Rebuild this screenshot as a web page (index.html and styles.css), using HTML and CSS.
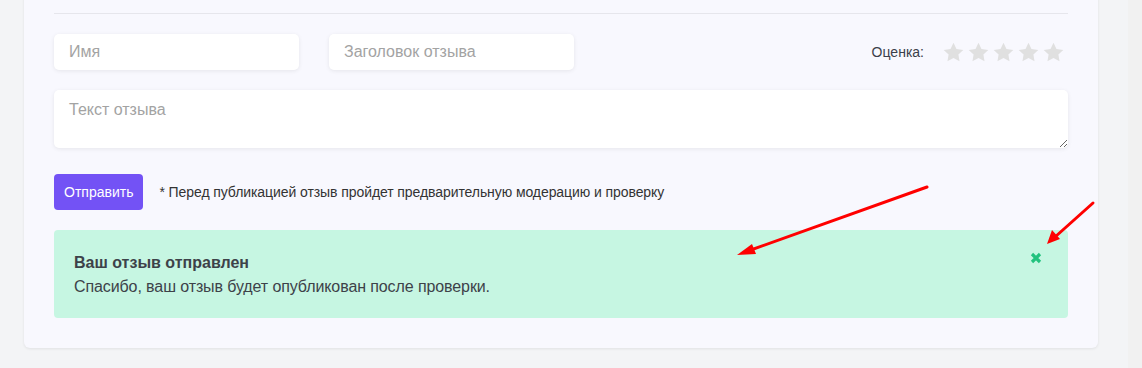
FILE: index.html
```html
<!DOCTYPE html>
<html lang="ru">
<head>
  <meta charset="UTF-8">
  <meta name="viewport" content="width=device-width, initial-scale=1.0">
  <title>Отзывы</title>
  <link rel="stylesheet" href="styles.css">
</head>
<body>

  <div class="page">
    <div class="card">
      <hr class="divider">

      <form class="review-form" onsubmit="return false">
        <div class="row">
          <input type="text" class="field" placeholder="Имя">
          <input type="text" class="field" placeholder="Заголовок отзыва">
          <div class="rating">
            <span class="rating-label">Оценка:</span>
            <div class="stars">
              <svg viewBox="0 0 24 24"><path d="M12 .8l3.4 7.1 7.8 1.1-5.6 5.4 1.3 7.7L12 18.4l-6.9 3.7 1.3-7.7L.8 9l7.8-1.1z"/></svg>
              <svg viewBox="0 0 24 24"><path d="M12 .8l3.4 7.1 7.8 1.1-5.6 5.4 1.3 7.7L12 18.4l-6.9 3.7 1.3-7.7L.8 9l7.8-1.1z"/></svg>
              <svg viewBox="0 0 24 24"><path d="M12 .8l3.4 7.1 7.8 1.1-5.6 5.4 1.3 7.7L12 18.4l-6.9 3.7 1.3-7.7L.8 9l7.8-1.1z"/></svg>
              <svg viewBox="0 0 24 24"><path d="M12 .8l3.4 7.1 7.8 1.1-5.6 5.4 1.3 7.7L12 18.4l-6.9 3.7 1.3-7.7L.8 9l7.8-1.1z"/></svg>
              <svg viewBox="0 0 24 24"><path d="M12 .8l3.4 7.1 7.8 1.1-5.6 5.4 1.3 7.7L12 18.4l-6.9 3.7 1.3-7.7L.8 9l7.8-1.1z"/></svg>
            </div>
          </div>
        </div>

        <textarea class="field text" placeholder="Текст отзыва"></textarea>

        <div class="submit-row">
          <button type="submit" class="btn">Отправить</button>
          <span class="note">* Перед публикацией отзыв пройдет предварительную модерацию и проверку</span>
        </div>
      </form>

      <div class="alert">
        <div>
          <div class="alert-title">Ваш отзыв отправлен</div>
          <div class="alert-text">Спасибо, ваш отзыв будет опубликован после проверки.</div>
        </div>
        <svg class="alert-close" viewBox="0 0 12 12"><path d="M2 2l8 8M10 2l-8 8"/></svg>
      </div>
    </div>
  </div>

  <div class="scrollbar"></div>

  <!-- annotation arrows -->
  <svg class="arrows" width="1142" height="368" viewBox="0 0 1142 368">
    <line x1="927" y1="187" x2="748" y2="251"/>
    <polygon points="737,255 752,244 756,254"/>
    <line x1="1093" y1="203" x2="1055" y2="237"/>
    <polygon points="1047,244 1052,230 1060,239"/>
  </svg>

</body>
</html>
```

FILE: styles.css
```css
body {
  margin: 0;
  height: 368px;
  overflow: hidden;
  display: flex;
  background: #f3f4f6;
  font-family: "Liberation Sans", Arial, sans-serif;
  color: #333;
}
.page {
  flex: 1;
  padding: 0 30px 0 24px;
}
.scrollbar {
  width: 14px;
  background: #f1f1f1;
}
.card {
  margin-top: -20px;
  padding: 33px 30px 30px;
  background: #f8f8fe;
  border-radius: 6px;
  box-shadow: 0 1px 3px rgba(0, 0, 0, 0.08);
}
.divider {
  margin: 0 0 20px;
  border: none;
  border-top: 1px solid #e6e6ec;
}
.row {
  display: flex;
  align-items: center;
  gap: 30px;
  margin-bottom: 20px;
}
.field {
  box-sizing: border-box;
  border: none;
  border-radius: 5px;
  background: #fff;
  box-shadow: 0 1px 4px rgba(0, 0, 0, 0.08);
  font-family: inherit;
  font-size: 16px;
  color: #333;
  outline: none;
}
.field::placeholder {
  color: #a3a3a3;
}
.row .field {
  width: 245px;
  height: 36px;
  padding: 0 15px;
}
.rating {
  margin-left: auto;
  display: flex;
  align-items: center;
  gap: 19px;
}
.rating-label {
  font-size: 14px;
  color: #3b3f4a;
}
.stars {
  display: flex;
  gap: 4px;
  padding-right: 4px;
}
.stars svg {
  width: 21px;
  height: 21px;
  fill: #e0e0e0;
}
.text {
  display: block;
  width: 100%;
  height: 58px;
  padding: 11px 15px;
  margin-bottom: 26px;
}
.submit-row {
  display: flex;
  align-items: center;
  gap: 16px;
  margin-bottom: 20px;
}
.btn {
  height: 36px;
  padding: 0 10px;
  border: none;
  border-radius: 4px;
  background: #7352f5;
  color: #fff;
  font-family: inherit;
  font-size: 14px;
  cursor: pointer;
}
.note {
  font-size: 14px;
  letter-spacing: -0.08px;
  color: #333;
}
.alert {
  display: flex;
  justify-content: space-between;
  padding: 21px 26px 19px 20px;
  background: #c6f6e2;
  border-radius: 4px;
  color: #3d4249;
  font-size: 16px;
  line-height: 24px;
}
.alert-title {
  font-weight: bold;
}
.alert-text {
  letter-spacing: -0.1px;
}
.alert-close {
  width: 12px;
  height: 12px;
  margin-top: 1px;
  stroke: #22c27e;
  stroke-width: 3.2;
}
.arrows {
  position: absolute;
  top: 0;
  left: 0;
  pointer-events: none;
}
.arrows line {
  stroke: #ff0000;
  stroke-width: 3;
  stroke-linecap: round;
}
.arrows polygon {
  fill: #ff0000;
}
```
